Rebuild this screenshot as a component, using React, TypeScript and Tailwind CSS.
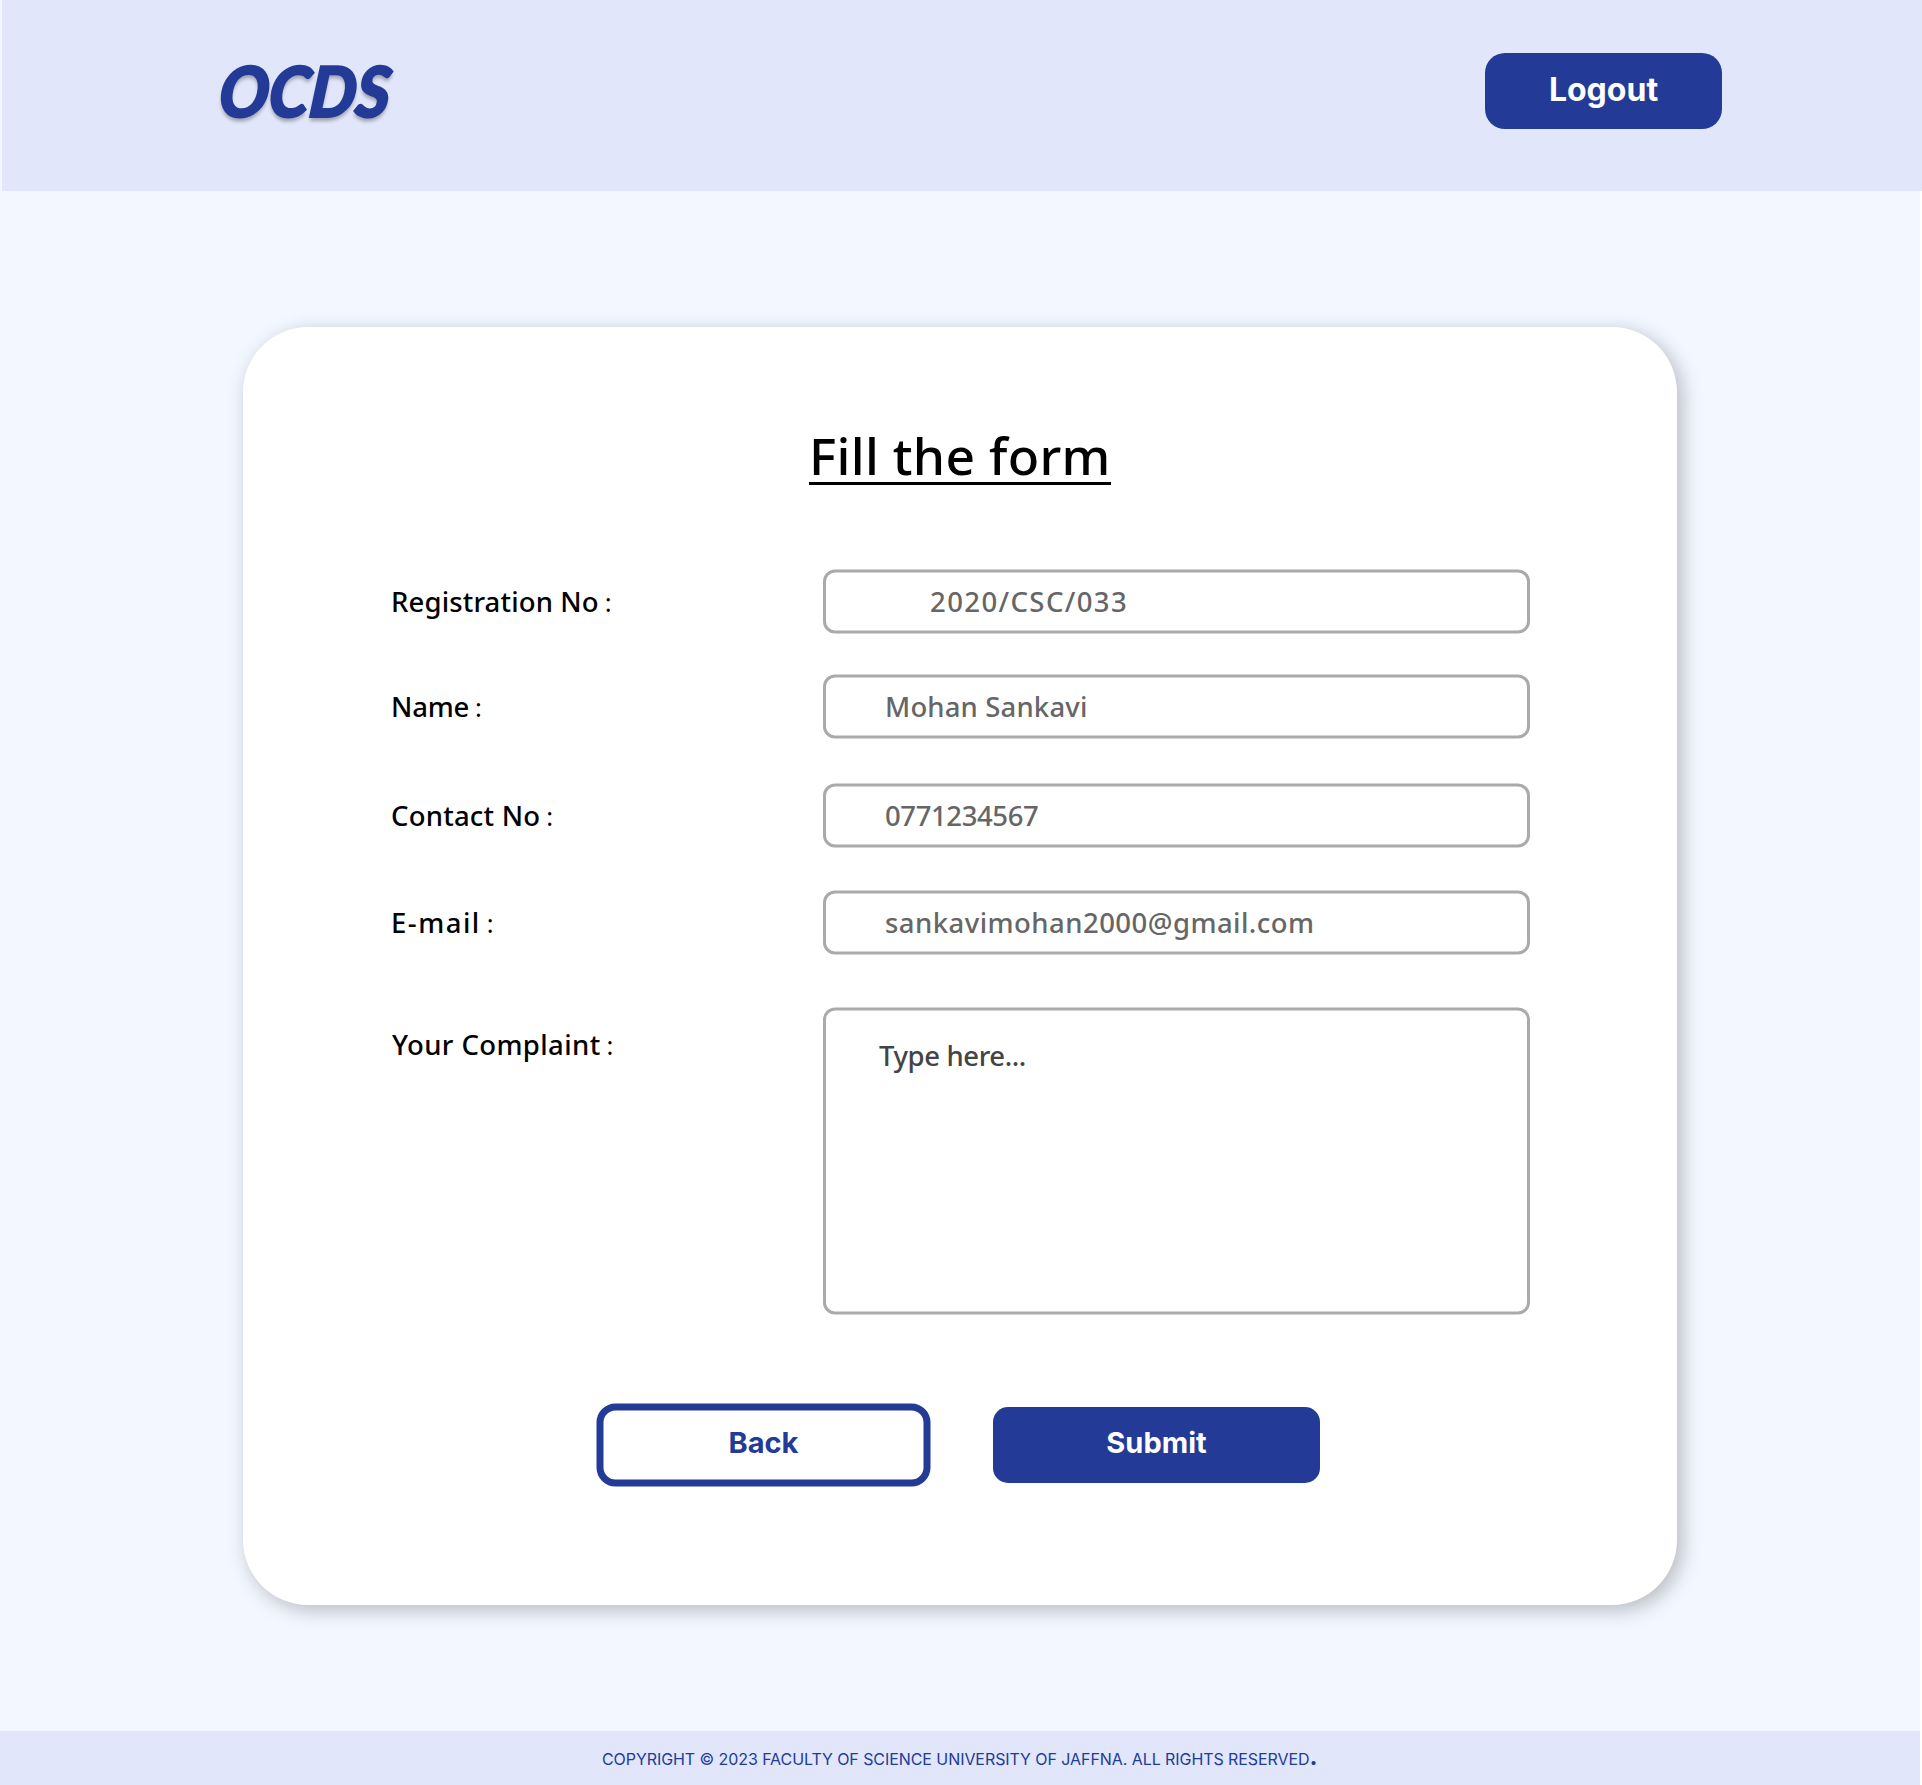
type Row = {
  label: string;
  labelClass: string;
  value: string;
  valueClass: string;
  rowClass: string;
};

const rows: Row[] = [
  {
    label: "Registration No",
    labelClass: "tracking-[0.14px]",
    value: "2020/CSC/033",
    valueClass: "pl-[104px] tracking-[1.4px]",
    rowClass: "mt-[84px]",
  },
  {
    label: "Name",
    labelClass: "tracking-[-0.2px]",
    value: "Mohan Sankavi",
    valueClass: "pl-[59px] tracking-[0.15px]",
    rowClass: "mt-[41px]",
  },
  {
    label: "Contact No",
    labelClass: "tracking-[0.22px]",
    value: "0771234567",
    valueClass: "pl-[59px] tracking-[-0.4px]",
    rowClass: "mt-[45px]",
  },
  {
    label: "E-mail",
    labelClass: "tracking-[1.5px]",
    value: "sankavimohan2000@gmail.com",
    valueClass: "pl-[59px] tracking-[0.46px]",
    rowClass: "mt-[43px]",
  },
];

function Label({ text, className }: { text: string; className: string }) {
  return (
    <div className="w-[433px] shrink-0 pl-px text-[27.5px] leading-[64px] font-medium whitespace-nowrap text-black">
      <span className={className}>{text}</span>
      <span className="ml-[6px] text-[25.5px] leading-none font-normal">:</span>
    </div>
  );
}

export default function App() {
  return (
    <div className="h-[1785px] w-[1922px] overflow-hidden bg-white">
      <div className="flex h-full w-[1920px] flex-col bg-[#f3f7ff] font-['Noto_Sans',sans-serif]">
        <header className="ml-[2px] flex h-[191px] w-[1920px] shrink-0 items-start justify-between bg-[#e1e6fa] pt-[53px] pr-[200px] pl-[217px]">
          <div className="-mt-px origin-left scale-x-[0.94] -skew-x-6 pl-px font-['Lato',sans-serif] text-[70px] leading-[76px] font-black text-[#233b97] italic [-webkit-text-stroke:2px_#233b97] [text-shadow:0_4px_4px_rgba(0,0,0,0.3)]">
            OCDS
          </div>
          <button className="h-[76px] w-[237px] rounded-[20px] bg-[#233b97] pb-[2px] font-['Inter',sans-serif] text-[32px] font-bold text-white">
            Logout
          </button>
        </header>

        <main className="mt-[136px] ml-[243px] flex h-[1278px] w-[1434px] shrink-0 flex-col rounded-[65px] bg-white pt-[107px] pl-[147px] shadow-[5px_5px_20px_rgba(0,0,0,0.25)]">
          <h1 className="ml-[419px] h-[51px] w-[302px] border-b-[3px] border-black text-[51.5px] leading-[42px] font-medium tracking-[0.3px] whitespace-nowrap text-black">
            Fill the form
          </h1>

          {rows.map((r) => (
            <div key={r.label} className={`flex translate-y-[0.5px] ${r.rowClass}`}>
              <Label text={r.label} className={r.labelClass} />
              <div
                className={`h-16 w-[707px] rounded-[12px] border-3 border-[#aaaaaa] text-[27.5px] leading-[58px] font-medium whitespace-nowrap text-[#666666] ${r.valueClass}`}
              >
                {r.value}
              </div>
            </div>
          ))}

          <div className="mt-[53px] flex translate-y-[0.5px]">
            <div className="-ml-px w-[434px] shrink-0 pt-[5px] pl-[2px]">
              <Label text="Your Complaint" className="tracking-[0.38px]" />
            </div>
            <div className="h-[307px] w-[707px] rounded-[12px] border-3 border-[#aaaaaa] pt-[13px] pl-[53px] text-[27.5px] leading-[64px] font-medium tracking-[-0.4px] text-[#444444]">
              Type here...
            </div>
          </div>

          <div className="mt-[89px] ml-[206px] flex items-center gap-[63px] font-['Inter',sans-serif] text-[29px] font-bold">
            <button className="h-[83px] w-[334px] translate-x-[0.5px] translate-y-[0.5px] rounded-[19px] border-7 border-[#233b97] pb-[5px] text-[#233b97]">
              Back
            </button>
            <button className="h-[76px] w-[327px] rounded-[15px] bg-[#233b97] pb-[3px] text-white">
              Submit
            </button>
          </div>
        </main>

        <footer className="mt-[126px] flex h-[54px] shrink-0 items-start bg-[#e1e6fa] pt-px pl-[602px] font-['Inter',sans-serif] text-[16px] leading-[54px] tracking-[-0.07px] whitespace-nowrap text-[#233b97]">
          <p>
            COPYRIGHT © 2023 FACULTY OF SCIENCE UNIVERSITY OF JAFFNA. ALL RIGHTS RESERVED
            <span className="text-[24px] leading-none font-bold">.</span>
          </p>
        </footer>
      </div>
    </div>
  );
}
